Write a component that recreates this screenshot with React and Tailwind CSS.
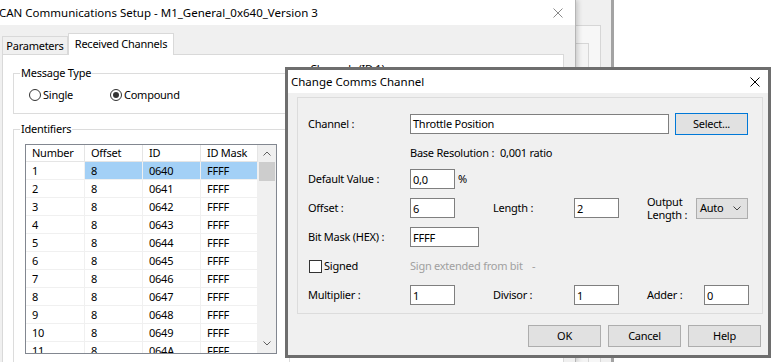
import React from 'react';

const rows = Array.from({ length: 11 }, (_, i) => ({
  n: i + 1,
  offset: 8,
  id: '064' + i.toString(16).toUpperCase(),
  mask: 'FFFF',
}));

function CloseIcon({ color = '#000', size = 10 }) {
  return (
    <svg width={size} height={size} viewBox="0 0 10 10" className="block">
      <path d="M0.5 0.5L9.5 9.5M9.5 0.5L0.5 9.5" stroke={color} strokeWidth="1" fill="none" />
    </svg>
  );
}

function Chevron({ up = false, color = '#606060' }) {
  return (
    <svg width="8" height="5" viewBox="0 0 8 5" className="block">
      <path d={up ? 'M0.5 4.5L4 1L7.5 4.5' : 'M0.5 0.5L4 4L7.5 0.5'} stroke={color} strokeWidth="1" fill="none" />
    </svg>
  );
}

function TextBox({ value, className = '' }) {
  return (
    <div className={`h-[20px] bg-white border border-[#7f7f7f] pl-[2px] flex items-center leading-none ${className}`}>
      {value}
    </div>
  );
}

function Button({ children, focused = false, className = '' }) {
  const edge = focused ? 'border-[#0078d7]' : 'border-[#adadad]';
  return (
    <div className={`h-[22px] w-[73px] bg-[#e1e1e1] border ${edge} flex items-center justify-center ${className}`}>
      {children}
    </div>
  );
}

function GroupLabel({ children }) {
  return (
    <span className="absolute -top-[9px] left-[6px] px-[1px] bg-white leading-[16px]">{children}</span>
  );
}

function Radio({ checked, label, className = '' }) {
  return (
    <div className={`h-[14px] flex items-center ${className}`}>
      <span className="w-[12px] h-[12px] rounded-full border border-[#333] bg-white flex items-center justify-center">
        {checked && <span className="w-[6px] h-[6px] rounded-full bg-[#333]" />}
      </span>
      <span className="ml-[2px]">{label}</span>
    </div>
  );
}

function IdTable() {
  return (
    <div className="ml-[11px] mt-[14px] w-[252px] h-[210px] border border-[#828790] bg-white flex overflow-hidden">
      <div className="w-[232px]">
        <div className="grid grid-cols-[59px_58px_58px_57px] h-[17px] border-b border-[#e5e5e5]">
          {['Number', 'Offset', 'ID', 'ID Mask'].map((h) => (
            <div key={h} className="pl-[6px] border-r border-[#e5e5e5] flex items-center">{h}</div>
          ))}
        </div>
        {rows.map((r) => {
          const sel = r.n === 1;
          const cell = `pl-[6px] border-r border-[#f0f0f0] flex items-center ${sel ? 'bg-[#a3d0f6]' : ''}`;
          return (
            <div key={r.n} className="grid grid-cols-[59px_58px_58px_57px] h-[18px] border-b border-[#f0f0f0]">
              <div className="pl-[6px] border-r border-[#f0f0f0] flex items-center">{r.n}</div>
              <div className={cell}>{r.offset}</div>
              <div className={cell}>{r.id}</div>
              <div className={cell}>{r.mask}</div>
            </div>
          );
        })}
      </div>
      <div className="w-[18px] bg-[#f0f0f0] flex flex-col">
        <div className="h-[17px] flex items-center justify-center">
          <Chevron up />
        </div>
        <div className="mx-[1px] h-[19px] bg-[#cdcdcd]" />
        <div className="flex-1" />
        <div className="h-[20px] flex items-center justify-center">
          <Chevron />
        </div>
      </div>
    </div>
  );
}

function MainWindow() {
  return (
    <div className="absolute left-0 top-0 w-[576px] h-[362px] bg-[#f0f0f0] border-r border-[#b5b5b5] shadow-[2px_0_5px_rgba(0,0,0,0.18)] flex flex-col">
      <div className="h-[25px] bg-white flex items-center shrink-0">
        <span className="-ml-[1px] text-[11.5px] tracking-normal">CAN Communications Setup - M1_General_0x640_Version 3</span>
        <span className="ml-auto mr-[12px]">
          <CloseIcon color="#8a8a8a" />
        </span>
      </div>
      <div className="pt-[8px] pl-[2px] flex flex-col flex-1">
        <div className="flex items-end h-[21px]">
          <div className="h-[18px] w-[66px] border border-b-0 border-[#d9d9d9] bg-[#f0f0f0] flex items-center justify-center">
            Parameters
          </div>
          <div className="h-[22px] w-[106px] -mb-px relative z-10 border border-b-0 border-[#d9d9d9] bg-white flex items-center justify-center pb-[2px]">
            Received Channels
          </div>
        </div>
        <div className="w-[562px] flex-1 border border-[#d9d9d9] bg-white flex">
          <div className="w-[288px] shrink-0">
            <div className="relative ml-[10px] mt-[18px] w-[277px] h-[41px] border border-[#dcdcdc] pt-[14px] pl-[15px] flex items-start">
              <GroupLabel>Message Type</GroupLabel>
              <Radio label="Single" />
              <Radio checked label="Compound" className="ml-[37px]" />
            </div>
            <div className="relative ml-[10px] mt-[15px] w-[277px] h-[240px] border border-[#dcdcdc]">
              <GroupLabel>Identifiers</GroupLabel>
              <IdTable />
            </div>
          </div>
          <div className="relative ml-[11px] mt-[14px] w-[250px] h-[250px] border border-[#dcdcdc]">
            <GroupLabel>Channels (ID 1)</GroupLabel>
          </div>
        </div>
      </div>
    </div>
  );
}

function Backdrop() {
  return (
    <>
      <div className="absolute left-[560px] top-0 w-[54px] h-[362px] bg-[#f0f0f0] border-r-[3px] border-[#a3a3a3]" />
      <div className="absolute left-[560px] top-[25px] w-[41px] h-[340px] border border-[#d6d6d6] bg-[#f7f7f7]" />
      <div className="absolute left-[560px] top-[43px] w-[29px] h-[330px] border border-[#d6d6d6] bg-[#f4f4f4]" />
    </>
  );
}

function ChangeChannelDialog() {
  return (
    <div className="absolute left-[285px] top-[67px] w-[486px] h-[291px] border-[3px] border-[#6e6e6e] bg-[#f0f0f0] flex flex-col z-20">
      <div className="h-[23px] bg-white flex items-center pl-[3px] pr-[8px] shrink-0">
        <span className="text-[11.5px] tracking-normal">Change Comms Channel</span>
        <span className="ml-auto">
          <CloseIcon />
        </span>
      </div>
      <div className="ml-[9px] mt-[4px] w-[466px] h-[217px] border border-[#dcdcdc] pl-[10px] flex flex-col">
        <div className="mt-[15px] h-[21px] flex items-center">
          <span className="w-[102px]">Channel :</span>
          <TextBox value="Throttle Position" className="w-[259px]" />
          <Button focused className="ml-[6px]">Select...</Button>
        </div>
        <div className="mt-[9px] h-[20px] flex items-center">
          <span className="w-[102px]" />
          <span className="w-[90px]">Base Resolution :</span>
          <span>0,001 ratio</span>
        </div>
        <div className="mt-[6px] h-[20px] flex items-center">
          <span className="w-[102px]">Default Value :</span>
          <TextBox value="0,0" className="w-[45px]" />
          <span className="ml-[3px]">%</span>
        </div>
        <div className="mt-[9px] h-[20px] flex items-center">
          <span className="w-[102px]">Offset :</span>
          <TextBox value="6" className="w-[45px]" />
          <span className="ml-[38px] w-[81px]">Length :</span>
          <TextBox value="2" className="w-[45px]" />
          <span className="ml-[28px] w-[49px] leading-[13px]">
            Output
            <br />
            Length :
          </span>
          <div className="h-[21px] w-[52px] bg-[#e1e1e1] border border-[#adadad] flex items-center pl-[3px] pr-[6px]">
            <span>Auto</span>
            <span className="ml-auto">
              <Chevron color="#444" />
            </span>
          </div>
        </div>
        <div className="mt-[9px] h-[20px] flex items-center">
          <span className="w-[102px]">Bit Mask (HEX) :</span>
          <TextBox value="FFFF" className="w-[69px]" />
        </div>
        <div className="mt-[9px] h-[20px] flex items-center">
          <div className="w-[102px] flex items-center">
            <span className="ml-[1px] w-[13px] h-[13px] border border-[#333] bg-white" />
            <span className="ml-[2px]">Signed</span>
          </div>
          <span className="w-[122px] text-[#a0a0a0]">Sign extended from bit</span>
          <span className="text-[#a0a0a0]">-</span>
        </div>
        <div className="mt-[9px] h-[20px] flex items-center">
          <span className="w-[102px]">Multiplier :</span>
          <TextBox value="1" className="w-[45px]" />
          <span className="ml-[38px] w-[81px]">Divisor :</span>
          <TextBox value="1" className="w-[45px]" />
          <span className="ml-[28px] w-[57px]">Adder :</span>
          <TextBox value="0" className="w-[45px]" />
        </div>
      </div>
      <div className="mt-[11px] pr-[7px] flex justify-end gap-[7px]">
        <Button>OK</Button>
        <Button>Cancel</Button>
        <Button>Help</Button>
      </div>
    </div>
  );
}

export default function App() {
  return (
    <div className="relative w-[771px] h-[362px] overflow-hidden bg-white text-black font-['Noto_Sans',sans-serif] text-[11px] tracking-[-0.25px] leading-[16px]">
      <Backdrop />
      <MainWindow />
      <ChangeChannelDialog />
    </div>
  );
}
